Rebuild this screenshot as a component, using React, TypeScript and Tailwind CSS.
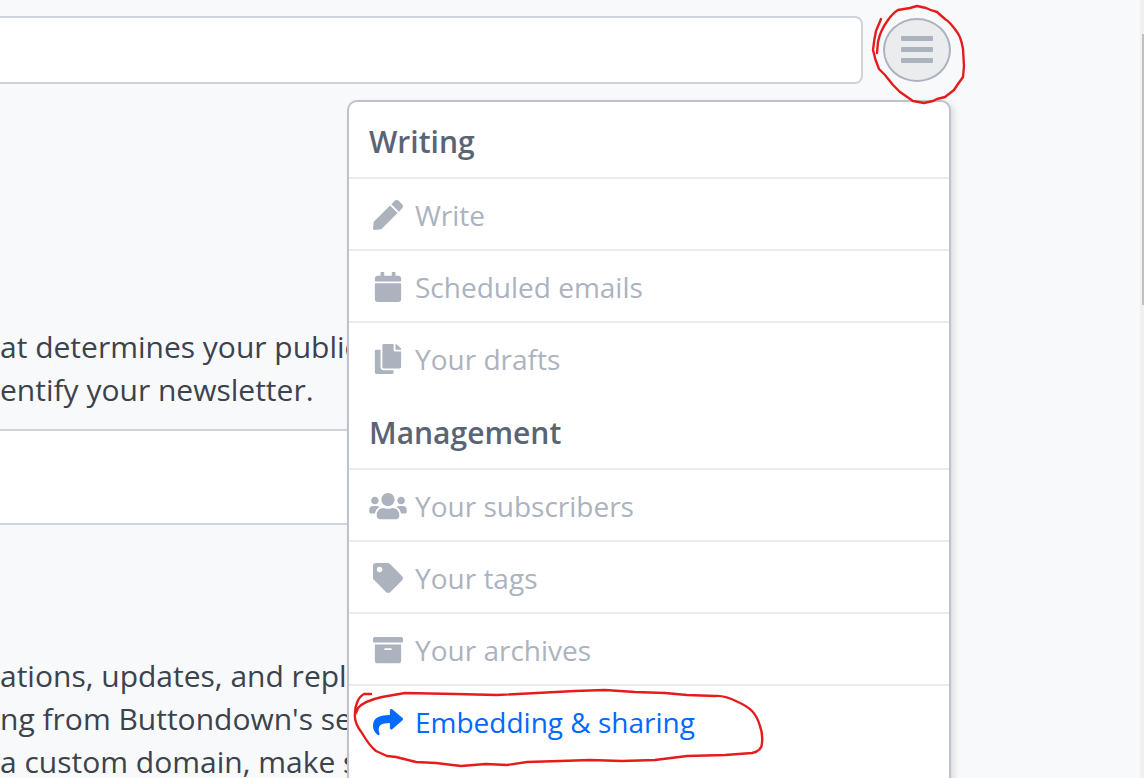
import type { IconType } from "react-icons";
import {
  FaArchive,
  FaCalendar,
  FaCopy,
  FaPen,
  FaShare,
  FaTag,
  FaUsers,
} from "react-icons/fa";

type Item = { label: string; icon: IconType; active?: boolean };
type Section = { title: string; items: Item[] };

const sections: Section[] = [
  {
    title: "Writing",
    items: [
      { label: "Write", icon: FaPen },
      { label: "Scheduled emails", icon: FaCalendar },
      { label: "Your drafts", icon: FaCopy },
    ],
  },
  {
    title: "Management",
    items: [
      { label: "Your subscribers", icon: FaUsers },
      { label: "Your tags", icon: FaTag },
      { label: "Your archives", icon: FaArchive },
      { label: "Embedding & sharing", icon: FaShare, active: true },
    ],
  },
];

function MenuSection({ title, items }: Section) {
  return (
    <section>
      <h2 className="border-b-2 border-[#ebebeb] pt-[18px] pb-[14px] pl-5 text-[30px] leading-[43px] font-semibold text-[#5b6472]">
        {title}
      </h2>
      <ul className="divide-y-2 divide-[#ebebeb]">
        {items.map(({ label, icon: Icon, active }) => (
          <li key={label}>
            <a
              href="#"
              className={`flex h-[70px] items-center gap-2 pt-[2px] pl-5 text-[28px] ${
                active ? "text-[#0069ff]" : "text-[#acb3bf]"
              }`}
            >
              <Icon className="h-[30px] w-[38px] shrink-0" aria-hidden="true" />
              {label}
            </a>
          </li>
        ))}
      </ul>
    </section>
  );
}

function NavMenu() {
  return (
    <nav
      aria-label="Main"
      className="absolute top-full right-0 mt-4 h-[760px] w-[604px] rounded-[10px] border-2 border-[#bdc2ce] bg-white shadow-[3px_3px_6px_rgba(0,0,0,0.12)]"
    >
      {sections.map((section) => (
        <MenuSection key={section.title} {...section} />
      ))}
      <svg
        className="pointer-events-none absolute top-[586px] left-[4px] h-[82px] w-[414px]"
        viewBox="353 688 414 82"
        fill="none"
        stroke="#e61c1c"
        strokeWidth="2.4"
        strokeLinecap="round"
        strokeLinejoin="round"
        aria-hidden="true"
      >
        <path d="M371 694 L364 694 C358 697 355 706 355 713 C354 721 358 728 362 733 C366 740 371 747 376 751 L387 756 L396 757 L416 762 L436 763 L461 766 L486 764 L507 765 L527 762 L560 761 L590 760 L622 761 L655 760 L687 756 L725 755 L752 753 Q762 751 762 743 Q763 734 760 726 Q757 716 752 711 Q747 706 738 702 Q724 695 715 696 L687 695 L665 693 L635 692 L605 690 L575 691 L497 695 L455 694 L405 693 L382 697 Q364 701 358 708 L356 713" />
      </svg>
    </nav>
  );
}

export default function App() {
  return (
    <div className="flex h-screen overflow-hidden bg-[#f8f9fb] font-['Open_Sans','Noto_Sans',sans-serif] text-[#3c434c]">
      <div className="min-w-0 grow">
        <header className="relative mr-[189px] flex items-center gap-5 pt-4">
          <input
            type="text"
            aria-label="Search"
            className="h-[68px] min-w-0 grow rounded-r-[8px] border-2 border-l-0 border-[#cfd3db] bg-white px-5 text-[30px] outline-none"
          />
          <div className="relative z-20 shrink-0">
            <button
              type="button"
              aria-label="Menu"
              className="flex h-[64px] w-[68px] flex-col items-center justify-center gap-[6px] rounded-[50%] border-2 border-[#acb3bf] bg-[#ebecee] pb-px"
            >
              <span className="h-[5px] w-8 rounded-[1px] bg-[#acb3bf]" />
              <span className="h-[5px] w-8 rounded-[1px] bg-[#acb3bf]" />
              <span className="h-[5px] w-8 rounded-[1px] bg-[#acb3bf]" />
            </button>
            <svg
              className="pointer-events-none absolute -top-[14px] -left-[13px] h-[102px] w-[98px]"
              viewBox="870 4 98 102"
              fill="none"
              stroke="#e61c1c"
              strokeWidth="2.4"
              strokeLinecap="round"
              strokeLinejoin="round"
              aria-hidden="true"
            >
              <path d="M881 19 L876 31 Q874 40 873 50 Q875 60 879 69 L885 75 L893 85 L900 92 L913 101 L924 103 L933 101 L937 99 L945 97 L954 90 L958 84 L963 77 L964 66 L963 49 Q961 37 957 32 Q950 22 945 19 L937 12 Q930 10 926 8 L917 6 L910 8 L898 10 Q893 13 888 20 Q880 31 878 42 L877 53" />
            </svg>
          </div>
          <div className="absolute inset-x-0 bottom-0 z-10">
            <NavMenu />
          </div>
        </header>

        <main className="mt-[241px] mr-[210px] text-[30px] leading-[43px] whitespace-nowrap">
          <p>
            at determines your public
            <br />
            entify your newsletter.
          </p>
          <input
            type="text"
            aria-label="Username"
            className="mt-[18px] block h-[96px] w-full border-y-2 border-[#cfd3db] bg-white px-5 outline-none"
          />
          <p className="mt-[129px]">
            ations, updates, and replies
            <br />
            ng from Buttondown's servers
            <br />a custom domain, make sure
          </p>
        </main>
      </div>
      <div className="w-1 shrink-0 bg-[#f0f0f0] pt-[34px] pl-[2px]" aria-hidden="true">
        <div className="h-[271px] bg-[#c0c0c0]" />
      </div>
    </div>
  );
}
